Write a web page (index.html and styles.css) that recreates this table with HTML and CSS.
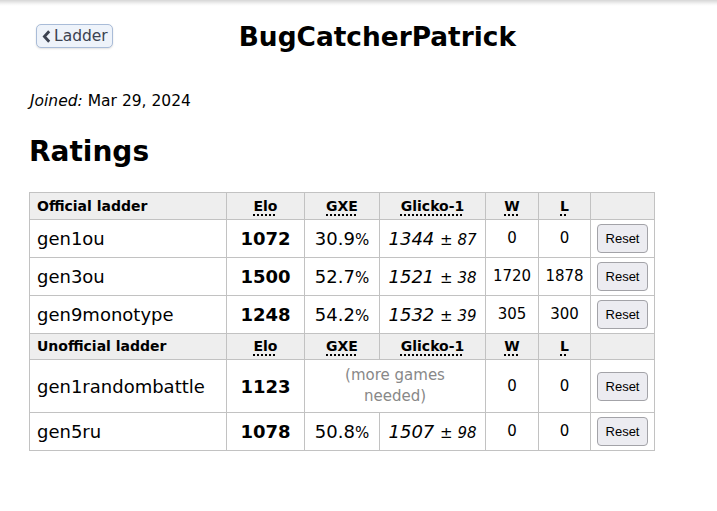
FILE: index.html
```html
<!DOCTYPE html>
<html>
<head>
<meta charset="utf-8">
<link rel="stylesheet" href="styles.css">
</head>
<body>
<div class="page">
  <header class="top">
    <a class="back-btn" href="#">
      <svg class="chev" width="9" height="13" viewBox="0 0 9 13"><path d="M7.2 1.2 L2.4 6.5 L7.2 11.8" fill="none" stroke="#3c4250" stroke-width="2.8" stroke-linejoin="miter"/></svg>
      <span>Ladder</span>
    </a>
    <h1 class="title">BugCatcherPatrick</h1>
  </header>

  <p class="joined"><em>Joined:</em> Mar 29, 2024</p>

  <h2 class="section">Ratings</h2>

  <table class="ratings">
    <colgroup>
      <col class="c-format"><col class="c-elo"><col class="c-gxe"><col class="c-glicko"><col class="c-w"><col class="c-l"><col class="c-btn">
    </colgroup>
    <tr class="head">
      <th class="fmt">Official ladder</th>
      <th><abbr>Elo</abbr></th>
      <th><abbr>GXE</abbr></th>
      <th><abbr>Glicko-1</abbr></th>
      <th><abbr>W</abbr></th>
      <th><abbr>L</abbr></th>
      <th></th>
    </tr>
    <tr>
      <td class="fmt">gen1ou</td>
      <td class="elo">1072</td>
      <td class="gxe">30.9<small>%</small></td>
      <td class="glicko"><em>1344</em> <small>± <em>87</em></small></td>
      <td class="num">0</td>
      <td class="num">0</td>
      <td class="act"><button class="reset">Reset</button></td>
    </tr>
    <tr>
      <td class="fmt">gen3ou</td>
      <td class="elo">1500</td>
      <td class="gxe">52.7<small>%</small></td>
      <td class="glicko"><em>1521</em> <small>± <em>38</em></small></td>
      <td class="num">1720</td>
      <td class="num">1878</td>
      <td class="act"><button class="reset">Reset</button></td>
    </tr>
    <tr>
      <td class="fmt">gen9monotype</td>
      <td class="elo">1248</td>
      <td class="gxe">54.2<small>%</small></td>
      <td class="glicko"><em>1532</em> <small>± <em>39</em></small></td>
      <td class="num">305</td>
      <td class="num">300</td>
      <td class="act"><button class="reset">Reset</button></td>
    </tr>
    <tr class="head head-2">
      <th class="fmt">Unofficial ladder</th>
      <th><abbr>Elo</abbr></th>
      <th><abbr>GXE</abbr></th>
      <th><abbr>Glicko-1</abbr></th>
      <th><abbr>W</abbr></th>
      <th><abbr>L</abbr></th>
      <th></th>
    </tr>
    <tr class="tall">
      <td class="fmt">gen1randombattle</td>
      <td class="elo">1123</td>
      <td class="pending" colspan="2">(more games<br>needed)</td>
      <td class="num">0</td>
      <td class="num">0</td>
      <td class="act"><button class="reset">Reset</button></td>
    </tr>
    <tr>
      <td class="fmt">gen5ru</td>
      <td class="elo">1078</td>
      <td class="gxe">50.8<small>%</small></td>
      <td class="glicko"><em>1507</em> <small>± <em>98</em></small></td>
      <td class="num">0</td>
      <td class="num">0</td>
      <td class="act"><button class="reset">Reset</button></td>
    </tr>
  </table>
</div>
</body>
</html>
```

FILE: styles.css
```css
html {
  background: #fff linear-gradient(to bottom, #d6d6d6 0, #e6e6e6 2px, #f6f6f6 4px, #fff 6px) no-repeat;
  background-size: 100% 6px;
}
body {
  margin: 0;
  font-family: "DejaVu Sans", Verdana, sans-serif;
  color: #000;
}
.page {
  padding: 24px 0 0 29px;
}
.top {
  display: flex;
  align-items: center;
  height: 24px;
}
.back-btn {
  display: flex;
  align-items: center;
  gap: 3px;
  box-sizing: border-box;
  height: 24px;
  margin-left: 7px;
  padding: 0 4px 0 5px;
  border: 1px solid #a9bcd8;
  border-radius: 5px;
  background: #eef3fa;
  box-shadow: 0 1px 2px rgba(0, 0, 0, 0.12);
  color: #3c4250;
  font-size: 15.5px;
  text-decoration: none;
}
.chev {
  display: block;
}
.title {
  margin: 0 0 0 126px;
  font-size: 26.4px;
  font-weight: bold;
  line-height: 30px;
  position: relative;
  top: 1px;
}
.joined {
  margin: 44px 0 0 1px;
  font-size: 15.5px;
  line-height: 18px;
}
.section {
  margin: 26px 0 0 0;
  font-size: 28px;
  font-weight: bold;
  line-height: 32px;
}
.ratings {
  margin-top: 24px;
  border-collapse: collapse;
  table-layout: fixed;
  width: 625px;
}
.c-format { width: 197px; }
.c-elo { width: 78px; }
.c-gxe { width: 75px; }
.c-glicko { width: 106px; }
.c-w { width: 53px; }
.c-l { width: 52px; }
.c-btn { width: 64px; }
.ratings th,
.ratings td {
  border: 1px solid #c2c2c2;
  padding: 4px 2px;
  text-align: center;
  white-space: nowrap;
}
.ratings th {
  background: #eee;
  font-size: 14px;
  line-height: 18px;
  font-weight: bold;
}
.ratings tr.head-2 th {
  line-height: 17px;
}
.ratings th.fmt,
.ratings td.fmt {
  text-align: left;
  padding-left: 7px;
}
abbr {
  text-decoration: underline dotted;
  text-underline-offset: 3px;
  text-decoration-thickness: 2px;
}
.ratings td {
  font-size: 18px;
  line-height: 29px;
}
.ratings td small {
  line-height: 1;
}
.elo {
  font-weight: bold;
}
.gxe small,
.glicko small {
  font-size: 15px;
}
.ratings td.num {
  font-size: 15px;
}
.ratings td.pending {
  font-size: 15px;
  line-height: 21px;
  color: #888;
  white-space: normal;
}
.ratings tr.tall td {
  padding-top: 5px;
  padding-bottom: 5px;
}
.reset {
  display: block;
  margin: 0 auto;
  box-sizing: border-box;
  width: 51px;
  height: 29px;
  padding: 0;
  border: 1px solid #a3a3a8;
  border-radius: 4px;
  background: #ececf1;
  font-family: "Liberation Sans", Arial, sans-serif;
  font-size: 13px;
  color: #000;
}
```
